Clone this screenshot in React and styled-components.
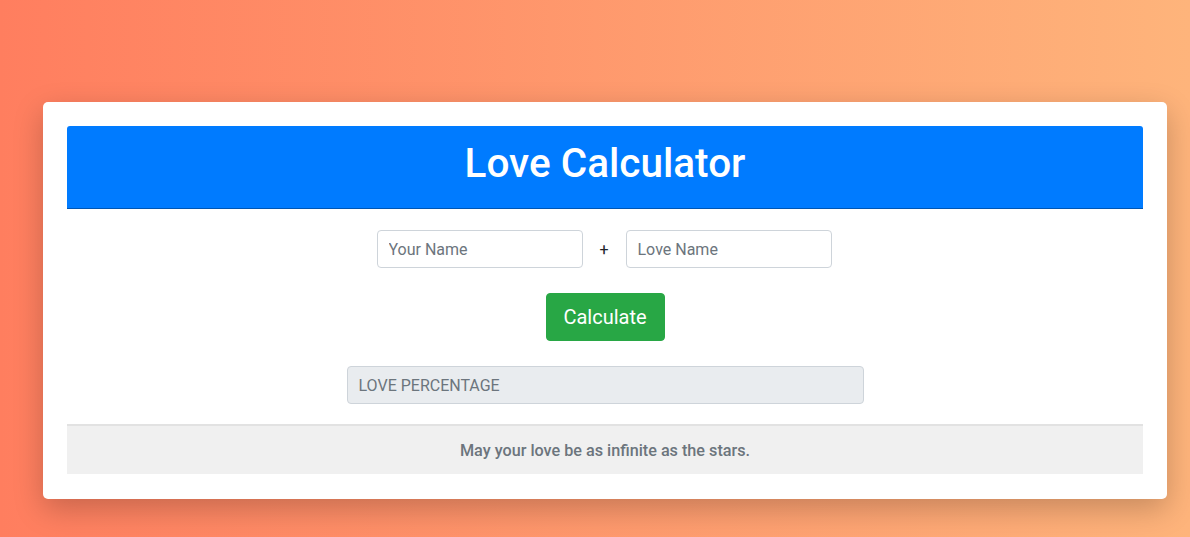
import React from "react";
import styled, { createGlobalStyle } from "styled-components";

const Global = createGlobalStyle`
  html, body { margin: 0; padding: 0; }
  body {
    font-family: Roboto, "Liberation Sans", Arial, sans-serif;
    background: linear-gradient(to right, #ff7e5f, #feb47b);
    min-height: 537px;
  }
  * { box-sizing: border-box; }
`;

const Page = styled.div`
  padding: 102px 23px 38px 43px;
`;

const Card = styled.div`
  background: #fff;
  border-radius: 5px;
  padding: 24px 24px 25px;
  box-shadow: 0 10px 30px rgba(0, 0, 0, 0.22);
  display: flex;
  flex-direction: column;
  align-items: center;
`;

const Header = styled.div`
  align-self: stretch;
  background: #007bff;
  border-radius: 3px 3px 0 0;
  border-bottom: 1px solid #0056b3;
  height: 83px;
  padding-bottom: 7px;
  display: flex;
  align-items: center;
  justify-content: center;
`;

const Title = styled.h1`
  margin: 0;
  color: #fff;
  font-size: 40.5px;
  font-weight: 500;
  line-height: 1.2;
`;

const NameRow = styled.div`
  margin-top: 21px;
  margin-right: 2px;
  display: flex;
  align-items: center;
`;

const Input = styled.input`
  width: ${(p) => p.$w || 206}px;
  height: 38px;
  padding: 6px 11px;
  font-family: inherit;
  font-size: 16px;
  color: #495057;
  background: ${(p) => (p.readOnly ? "#e9ecef" : "#fff")};
  border: 1px solid #ced4da;
  border-radius: 4px;
  outline: none;
  &::placeholder { color: #6c757d; opacity: 1; }
`;

const Plus = styled.span`
  width: 43px;
  text-align: center;
  font-size: 16px;
  color: #212529;
`;

const Button = styled.button`
  margin-top: 25px;
  width: 119px;
  height: 48px;
  background: #28a745;
  color: #fff;
  border: 1px solid #28a745;
  border-radius: 4px;
  font-family: inherit;
  font-size: 20px;
  cursor: pointer;
`;

const ResultWrap = styled.div`
  margin-top: 25px;
  display: flex;
  justify-content: center;
`;

const Footer = styled.div`
  align-self: stretch;
  margin-top: 20px;
  height: 50px;
  background: #f0f0f0;
  border-top: 2px solid #e2e2e2;
  display: flex;
  align-items: center;
  justify-content: center;
  color: #6c757d;
  font-size: 16.2px;
  font-weight: 500;
`;

export default function App() {
  return (
    <>
      <Global />
      <Page>
        <Card>
          <Header>
            <Title>Love Calculator</Title>
          </Header>
          <NameRow>
            <Input placeholder="Your Name" />
            <Plus>+</Plus>
            <Input placeholder="Love Name" />
          </NameRow>
          <Button>Calculate</Button>
          <ResultWrap>
            <Input $w={517} readOnly placeholder="LOVE PERCENTAGE" />
          </ResultWrap>
          <Footer>May your love be as infinite as the stars.</Footer>
        </Card>
      </Page>
    </>
  );
}
